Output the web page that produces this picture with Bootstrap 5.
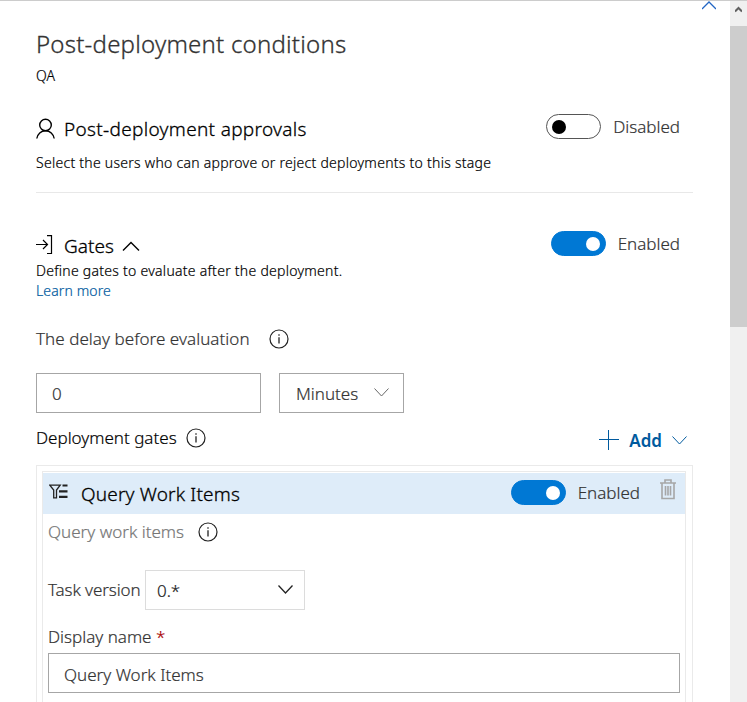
<!DOCTYPE html>
<html lang="en">
<head>
<meta charset="utf-8">
<title>Post-deployment conditions</title>
<link href="https://cdn.jsdelivr.net/npm/bootstrap@5.3.0/dist/css/bootstrap.min.css" rel="stylesheet">
<style>
body{font-family:"Noto Sans","Open Sans",sans-serif;font-weight:300;-webkit-text-stroke:.2px currentColor;color:#333;font-size:17px;background:#fff}
svg{display:block;flex:none;fill:none;stroke:currentColor}
.shell{height:702px;border-top:1px solid #ccc}
.pane{padding:27px 37px 0 36px}
.sbar{width:17px;background:#f0f0f0}
.sbar-up{height:25px;padding:5px 0 0 5px;color:#606060}
.sbar-thumb{height:301px;background:#cdcdcd}
.page-up{top:0;right:14px;color:#2266c4}
.title{font-size:24px;line-height:32px;letter-spacing:.22px;font-weight:300;-webkit-text-stroke-width:.3px}
.copy{font-size:14px;line-height:20px;color:#000;letter-spacing:.13px}
.copy.wide{letter-spacing:.27px}
.stage{margin-top:6px}
.sel{margin-top:9px}
.sect{font-size:19px;line-height:30px;color:#000;-webkit-text-stroke-width:.3px}
.sect-name{margin-left:9px}
.approvals{letter-spacing:.32px}
.label-text{line-height:24px}
.sw-side{padding-right:13px}
.sw-text{margin:1px 0 -1px 12px}
.switch{width:55px;height:25px;border-radius:13px;border:1px solid #555;padding:0 5px}
.switch i{width:14px;height:14px;border-radius:50%;background:#000}
.switch.on{background:#0078d4;border-color:#0078d4;justify-content:flex-end}
.switch.on i{background:#fff}
.rule{height:1px;background:#e8e8e8;margin-top:19px}
.lnk{color:#005a9e}
.gates-sect{padding-top:38px}
.gates-chev{margin:10px 0 0 8px}
.delay-row{margin-top:26px;height:24px;letter-spacing:.05px}
.info-a{margin-left:19px}
.info-b{margin-left:9px}
.info-c{margin-left:14px}
.fields{margin-top:22px;gap:18px}
.field{height:40px;border:1px solid #a6a6a6;background:#fff;color:#333}
.f-delay{width:225px;padding:2px 0 0 15px}
.f-unit{width:125px;padding:2px 14px 0 16px}
.f-version{width:160px;border-color:#dcdcdc;padding:2px 11px 0 11px;margin-left:5px;color:#222}
.f-name{padding:3px 0 0 15px;margin-top:4px}
.add-row{height:24px;margin-top:13px;margin-bottom:15px}
.add{padding:4px 6px 0 0}
.add-text{font-weight:600;-webkit-text-stroke-width:0;margin:2px 10px 0;line-height:20px}
.gates{border:1px solid #eaeaea;border-bottom:0;padding:5px 6px 0 5px;height:237px;overflow:hidden}
.gate{border:1px solid #eaeaea;border-bottom:0;padding-top:1px;height:240px}
.gate-head{height:41px;background:#deecf9;padding:0 9px 0 6px}
.gate-title{margin-left:13px;letter-spacing:.17px}
.gate-tools{margin-top:-2px}
.trash{margin:-1px 0 0 20px}
.gate-body{padding:6px 5px 0}
.desc{color:#767676}
.version-row{margin-top:26px}
.task{letter-spacing:-.1px;width:92px;white-space:nowrap}
.name-row{margin-top:15px}
.star{color:#a80000}
</style>
</head>
<body>
<div class="shell d-flex overflow-hidden">
  <main class="pane flex-grow-1 position-relative">
    <svg class="page-up position-absolute" width="14" height="9" viewBox="0 0 14 9" stroke-width="1.3"><path d="M0 8 7 1l7 7"/></svg>
    <h1 class="title m-0">Post-deployment conditions</h1>
    <div class="copy stage">QA</div>

    <section>
      <div class="d-flex justify-content-between pt-4 mt-1">
        <div class="sect d-flex">
          <svg class="mt-1" width="19" height="22" viewBox="0 0 19 22" stroke-width="1.4"><circle cx="9.500" cy="7" r="5.800"/><path d="M.8 20.500C1.500 16 5 12.800 9.500 12.800S17.500 16 18.200 20.500"/></svg>
          <span class="sect-name approvals">Post-deployment approvals</span>
        </div>
        <div class="sw-side d-flex align-items-start">
          <span class="switch d-flex align-items-center"><i></i></span><span class="label-text sw-text">Disabled</span>
        </div>
      </div>
      <div class="copy wide sel">Select the users who can approve or reject deployments to this stage</div>
      <div class="rule"></div>
    </section>

    <section class="gates-sect">
      <div class="d-flex justify-content-between">
        <div class="sect d-flex">
          <svg class="mt-1" width="19" height="20" viewBox="0 0 19 20" stroke-width="1.2"><path d="M0 9.500h11.500M7 5l4.500 4.500L7 14M11 .6h4.500v17.900H11"/></svg>
          <span class="sect-name">Gates</span>
          <svg class="gates-chev" width="18" height="11" viewBox="0 0 18 11" stroke-width="1.4"><path d="m1 9.500 8-8 8 8"/></svg>
        </div>
        <div class="sw-side d-flex align-items-start">
          <span class="switch on d-flex align-items-center"><i></i></span><span class="label-text sw-text">Enabled</span>
        </div>
      </div>
      <div class="copy wide">Define gates to evaluate after the deployment.</div>
      <div class="copy"><a href="#" class="lnk text-decoration-none">Learn more</a></div>

      <div class="delay-row d-flex align-items-center">
        <span class="label-text">The delay before evaluation</span>
        <svg class="info-a" width="20" height="20" viewBox="0 0 20 20" stroke-width="1.2" color="#222"><circle cx="10" cy="10" r="9"/><path d="M10 8.300v6.200M10 5.200v1.600" stroke-width="1.300"/></svg>
      </div>
      <div class="fields d-flex">
        <div class="field f-delay d-flex align-items-center">0</div>
        <div class="field f-unit d-flex align-items-center justify-content-between">Minutes
          <svg class="mb-1" width="15" height="9" viewBox="0 0 15 9" stroke-width="1" color="#666"><path d="m.5.5 7 7.500 7-7.500"/></svg>
        </div>
      </div>
      <div class="add-row d-flex align-items-center justify-content-between">
        <div class="d-flex align-items-center text-black">
          <span class="label-text">Deployment gates</span>
          <svg class="info-b" width="20" height="20" viewBox="0 0 20 20" stroke-width="1.200" color="#222"><circle cx="10" cy="10" r="9"/><path d="M10 8.300v6.200M10 5.200v1.600" stroke-width="1.300"/></svg>
        </div>
        <div class="add d-flex align-items-center lnk">
          <svg width="20" height="20" viewBox="0 0 20 20" stroke-width="1"><path d="M0 9.500h20M9.500 0v20"/></svg>
          <span class="add-text">Add</span>
          <svg width="15" height="9" viewBox="0 0 15 9" stroke-width="1"><path d="m.5.5 7 7.500 7-7.500"/></svg>
        </div>
      </div>
    </section>

    <section class="gates">
      <div class="gate">
        <div class="gate-head d-flex align-items-center justify-content-between">
          <div class="sect d-flex align-items-center">
            <svg class="mb-1" width="19" height="15" viewBox="0 0 19 15" stroke-width="1.300" color="#222"><path d="M.8 1.200h10.400L7.500 6v7.800H4.700V6z"/><path d="M13.500 1.500h5M10 7.300h8.500M10 12.800h8.500" stroke-width="2.200"/></svg>
            <span class="gate-title">Query Work Items</span>
          </div>
          <div class="gate-tools d-flex">
            <span class="switch on d-flex align-items-center"><i></i></span><span class="label-text sw-text">Enabled</span>
            <svg class="trash" width="16" height="21" viewBox="0 0 16 21" stroke-width="1.600" color="#a6a6a6"><path d="M0 4h16M5 4V1h6v3M2 4v15.500h12V4M5.500 7v9.500M8 7v9.500M10.500 7v9.500"/></svg>
          </div>
        </div>
        <div class="gate-body">
          <div class="d-flex align-items-center">
            <span class="label-text desc">Query work items</span>
            <svg class="info-c" width="20" height="20" viewBox="0 0 20 20" stroke-width="1.200" color="#222"><circle cx="10" cy="10" r="9"/><path d="M10 8.300v6.200M10 5.200v1.600" stroke-width="1.300"/></svg>
          </div>
          <div class="version-row d-flex align-items-center">
            <span class="label-text task">Task version</span>
            <div class="field f-version d-flex align-items-center justify-content-between">0.*
              <svg class="mb-1" width="15" height="9" viewBox="0 0 15 9" stroke-width="1.300"><path d="m.5.5 7 7.500 7-7.500"/></svg>
            </div>
          </div>
          <div class="label-text name-row">Display name <span class="star">*</span></div>
          <div class="field f-name d-flex align-items-center">Query Work Items</div>
        </div>
      </div>
    </section>
  </main>
  <aside class="sbar flex-shrink-0">
    <div class="sbar-up"><svg width="7" height="7" viewBox="0 0 7 7" stroke-width="2"><path d="M0 5.500 3.500 2 7 5.500"/></svg></div>
    <div class="sbar-thumb"></div>
  </aside>
</div>
<script src="https://cdn.jsdelivr.net/npm/bootstrap@5.3.0/dist/js/bootstrap.bundle.min.js"></script>
</body>
</html>
